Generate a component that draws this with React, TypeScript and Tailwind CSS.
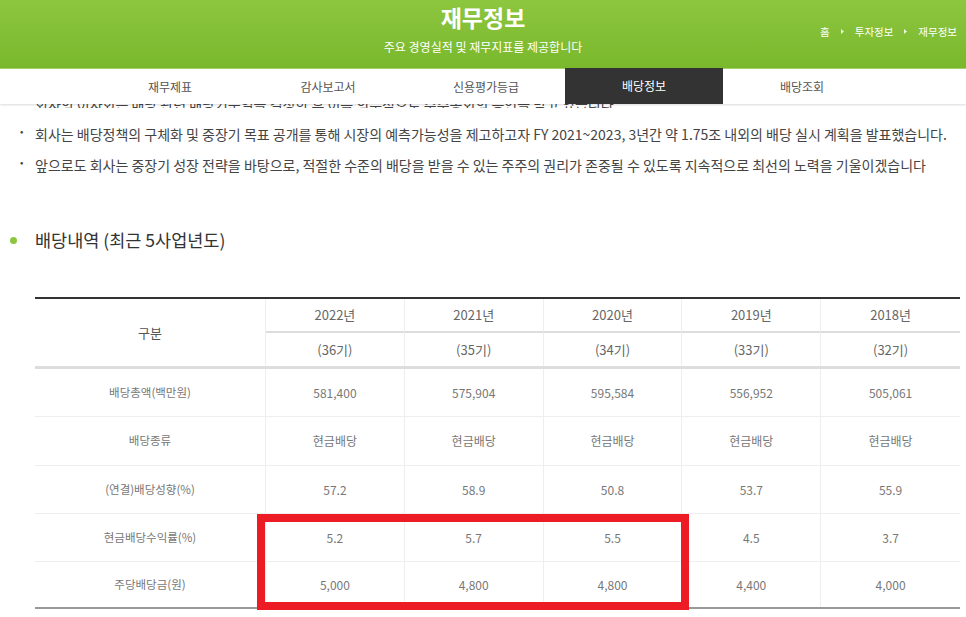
import React from "react";

const years = [
  { y: "2022년", g: "(36기)" },
  { y: "2021년", g: "(35기)" },
  { y: "2020년", g: "(34기)" },
  { y: "2019년", g: "(33기)" },
  { y: "2018년", g: "(32기)" },
];

const rows: { label: string; vals: string[]; h: string }[] = [
  { label: "배당총액(백만원)", vals: ["581,400", "575,904", "595,584", "556,952", "505,061"], h: "h-[48px]" },
  { label: "배당종류", vals: ["현금배당", "현금배당", "현금배당", "현금배당", "현금배당"], h: "h-[49px]" },
  { label: "(연결)배당성향(%)", vals: ["57.2", "58.9", "50.8", "53.7", "55.9"], h: "h-[48px]" },
  { label: "현금배당수익률(%)", vals: ["5.2", "5.7", "5.5", "4.5", "3.7"], h: "h-[48px]" },
  { label: "주당배당금(원)", vals: ["5,000", "4,800", "4,800", "4,400", "4,000"], h: "h-[47px]" },
];

const tabs = ["재무제표", "감사보고서", "신용평가등급", "배당정보", "배당조회"];

function Arrow() {
  return (
    <svg width="3" height="5" viewBox="0 0 3 5" className="mx-[2px]">
      <path d="M0 0 L3 2.5 L0 5 Z" fill="#ffffff" fillOpacity="0.85" />
    </svg>
  );
}

export default function App() {
  return (
    <div
      className="relative w-[966px] h-[617px] overflow-hidden bg-white text-[#333]"
      style={{ fontFamily: '"Noto Sans CJK KR", "Noto Sans", sans-serif' }}
    >
      {/* Header */}
      <div className="relative h-[69px] bg-gradient-to-b from-[#8dc63f] to-[#79b82c] border-b border-[#a6d46a]">
        <div className="flex flex-col items-center pt-[1px]">
          <div className="text-[23px] leading-[32px] font-bold text-white">재무정보</div>
          <div className="mt-[6px] text-[12px] leading-[16px] text-white">주요 경영실적 및 재무지표를 제공합니다</div>
        </div>
        <div className="absolute right-[9px] top-[24px] flex items-center gap-[9px] text-[10.5px] text-white">
          <span>홈</span>
          <Arrow />
          <span>투자정보</span>
          <Arrow />
          <span>재무정보</span>
        </div>
      </div>

      {/* Nav */}
      <div className="relative z-10 h-[35px] bg-white shadow-[0_1px_2px_rgba(0,0,0,0.15)]">
        <div className="flex pl-[91px] h-full">
          {tabs.map((t) => (
            <div
              key={t}
              className={
                t === "배당정보"
                  ? "w-[158px] -mt-[1px] h-[36px] flex items-center justify-center bg-[#333333] text-white text-[12px]"
                  : "w-[158px] h-full flex items-center justify-center text-[#555] text-[12px]"
              }
            >
              {t}
            </div>
          ))}
        </div>
      </div>

      {/* Cut line under nav */}
      <div className="h-[4px] overflow-hidden">
        <div className="-mt-[10px] pl-[35px] text-[14px] leading-[20px] text-[#444] whitespace-nowrap">
          회사의 이사회는 배당 관련 배당기준일을 결정한 후 이를 의무적으로 주주총회의 승인을 받고 있습니다.
        </div>
      </div>

      {/* Bullets */}
      <div className="mt-[16px] flex flex-col gap-[11px] text-[14px] leading-[20px] text-[#444]">
        <div className="flex items-start pl-[20px]">
          <span className="w-[15px] shrink-0 text-[10px] leading-[14px]">•</span>
          <span className="whitespace-nowrap">회사는 배당정책의 구체화 및 중장기 목표 공개를 통해 시장의 예측가능성을 제고하고자 FY 2021~2023, 3년간 약 1.75조 내외의 배당 실시 계획을 발표했습니다.</span>
        </div>
        <div className="flex items-start pl-[20px]">
          <span className="w-[15px] shrink-0 text-[10px] leading-[14px]">•</span>
          <span className="whitespace-nowrap">앞으로도 회사는 중장기 성장 전략을 바탕으로, 적절한 수준의 배당을 받을 수 있는 주주의 권리가 존중될 수 있도록 지속적으로 최선의 노력을 기울이겠습니다</span>
        </div>
      </div>

      {/* Section title */}
      <div className="mt-[53px] flex items-center pl-[10px]">
        <span className="w-[7px] h-[7px] rounded-full bg-[#8cc63f]" />
        <span className="ml-[18px] text-[17.5px] leading-[24px] text-[#333]">배당내역 (최근 5사업년도)</span>
      </div>

      {/* Table */}
      <div className="relative mt-[45px] ml-[35px] w-[925px] border-t-2 border-[#333] text-[#777]">
        <div className="grid grid-cols-[231px_repeat(5,1fr)] border-b-[3px] border-[#ddd]">
          <div className="row-span-2 flex items-center justify-center text-[13px] text-[#555] border-r border-[#eee]">구분</div>
          {years.map((y, i) => (
            <div
              key={y.y}
              className={`h-[34px] flex items-center justify-center text-[13px] text-[#666] border-b-2 border-[#ddd] ${i < 4 ? "border-r border-r-[#eee]" : ""}`}
            >
              {y.y}
            </div>
          ))}
          {years.map((y, i) => (
            <div
              key={y.g}
              className={`h-[33px] flex items-center justify-center text-[13px] text-[#666] ${i < 4 ? "border-r border-[#eee]" : ""}`}
            >
              {y.g}
            </div>
          ))}
        </div>
        {rows.map((r, ri) => (
          <div
            key={r.label}
            className={`grid grid-cols-[231px_repeat(5,1fr)] ${r.h} ${ri < rows.length - 1 ? "border-b border-[#eee]" : "border-b-2 border-[#999]"}`}
          >
            <div className="flex items-center justify-center text-[11.5px] text-[#777] border-r border-[#eee]">{r.label}</div>
            {r.vals.map((v, i) => (
              <div
                key={i}
                className={`flex items-center justify-center text-[12px] text-[#777] ${i < 4 ? "border-r border-[#eee]" : ""}`}
              >
                {v}
              </div>
            ))}
          </div>
        ))}
      </div>

      {/* Red highlight box */}
      <div className="absolute left-[257px] top-[514px] w-[432px] h-[96px] border-[8px] border-[#ed1c24]" />
    </div>
  );
}
